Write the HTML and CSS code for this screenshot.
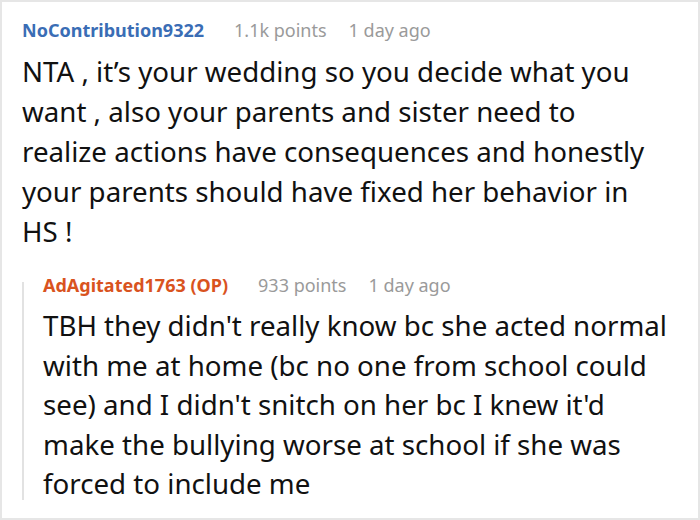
FILE: index.html
```html
<!DOCTYPE html>
<html>
<head>
<meta charset="utf-8">
<link rel="stylesheet" href="styles.css">
</head>
<body>
<div class="frame">
  <div class="comment">
    <div class="meta">
      <span class="user user-blue">NoContribution9322</span>
      <span class="points">1.1k points</span>
      <span class="time">1 day ago</span>
    </div>
    <p class="text text-main">NTA , it’s your wedding so you decide what you want , also your parents and sister need to realize actions have consequences and honestly your parents should have fixed her behavior in HS !</p>
    <div class="reply">
      <div class="meta">
        <span class="user user-orange">AdAgitated1763 (OP)</span>
        <span class="points">933 points</span>
        <span class="time">1 day ago</span>
      </div>
      <p class="text text-reply">TBH they didn't really know bc she acted normal with me at home (bc no one from school could see) and I didn't snitch on her bc I knew it'd make the bullying worse at school if she was forced to include me</p>
    </div>
  </div>
</div>
</body>
</html>
```

FILE: styles.css
```css
html, body {
  margin: 0;
  padding: 0;
  background: #ffffff;
}
.frame {
  box-sizing: border-box;
  width: 700px;
  height: 520px;
  border: 2px solid #e6e6e6;
  padding: 14px 20px 0 20px;
  font-family: "Noto Sans", "Open Sans", sans-serif;
  overflow: hidden;
}
.meta {
  display: flex;
  align-items: baseline;
  height: 28px;
  line-height: 28px;
  font-size: 18px;
  white-space: nowrap;
}
.user {
  font-weight: 700;
}
.user-blue {
  color: #3a6db5;
}
.user-orange {
  color: #d9531e;
}
.points {
  color: #9a9a9a;
  margin-left: 30px;
}
.time {
  color: #9a9a9a;
  margin-left: 22px;
}
.text {
  margin: 0;
  font-size: 27.7px;
  line-height: 40px;
  color: #111111;
}
.text-main {
  margin-top: 7px;
  padding-right: 14px;
}
.reply {
  position: relative;
  margin-top: 20px;
  padding-left: 21px;
}
.reply::before {
  content: "";
  position: absolute;
  left: 0;
  top: 11px;
  bottom: 4px;
  width: 2px;
  background: #e2e2e2;
}
.text-reply {
  margin-top: 7px;
  line-height: 39.5px;
}
```
